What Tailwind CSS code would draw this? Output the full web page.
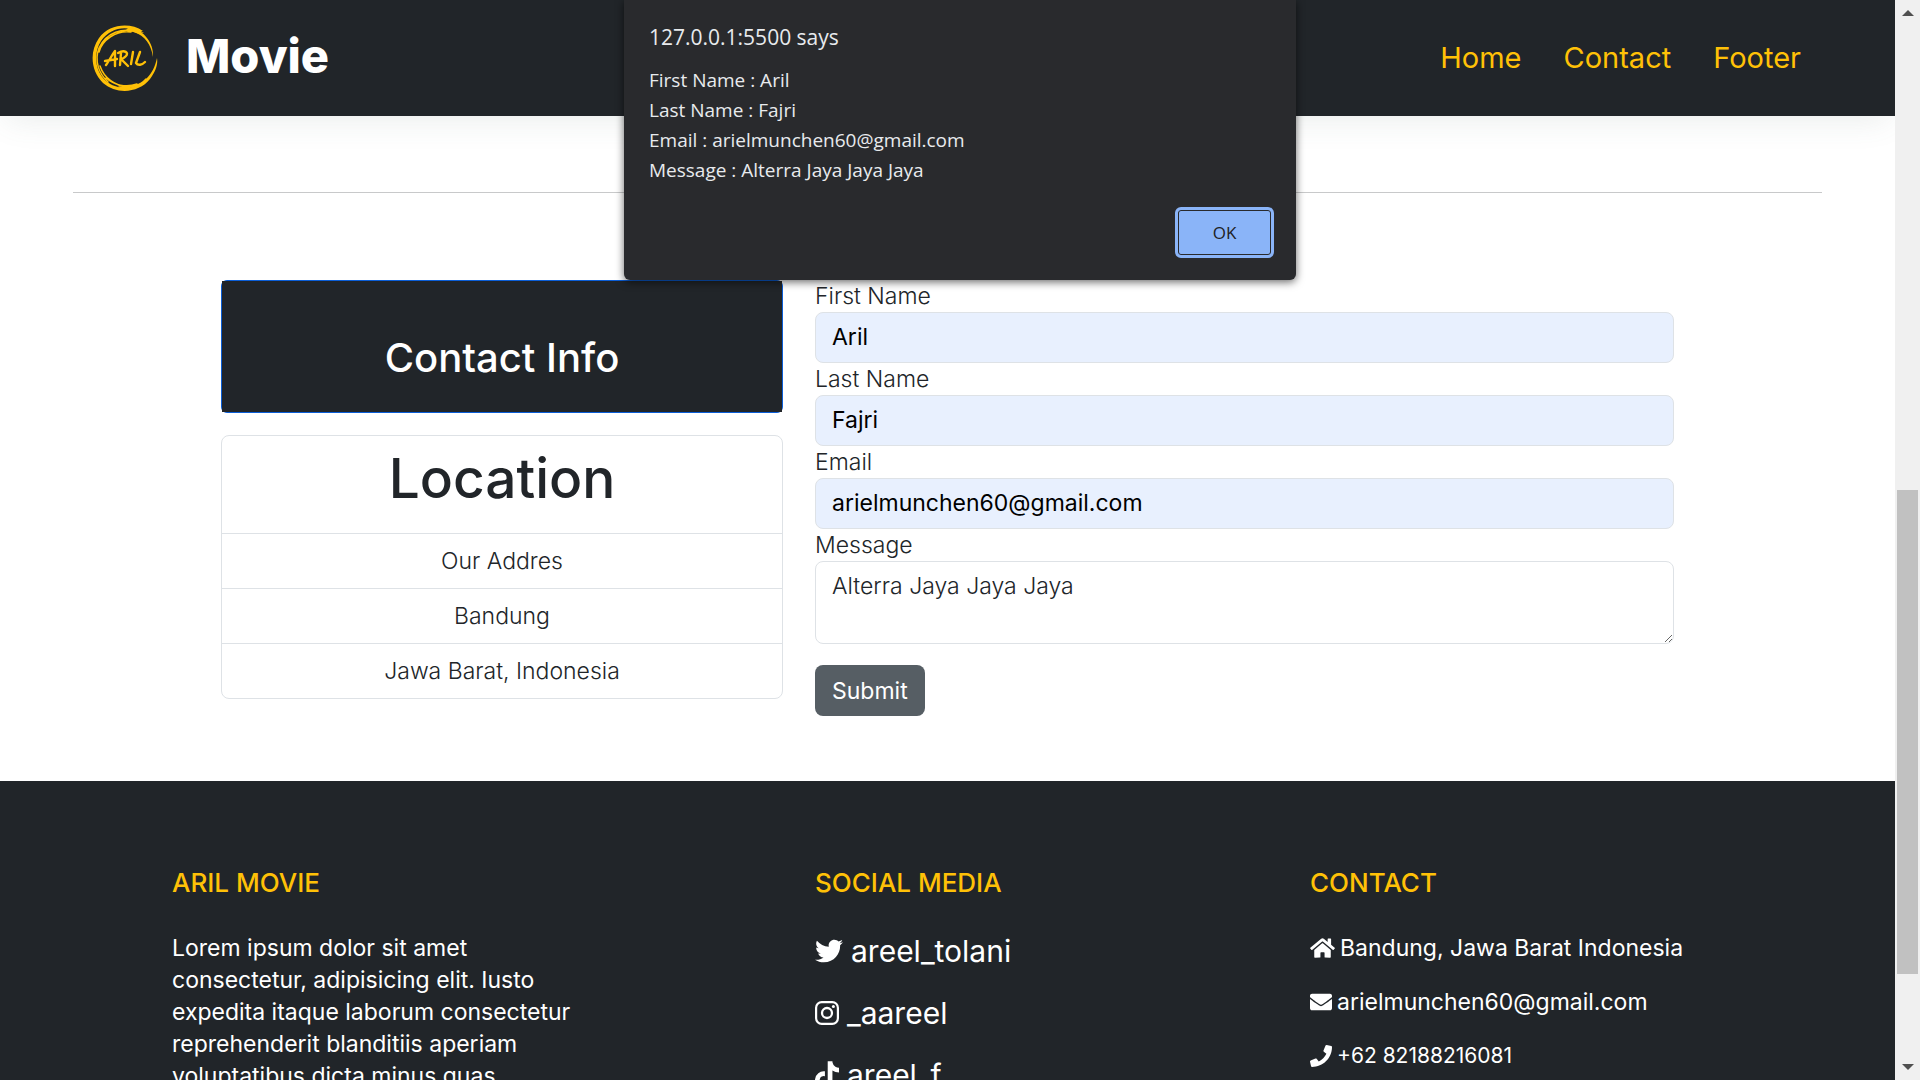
<!DOCTYPE html>
<html lang="en">
<head>
<meta charset="utf-8">
<meta name="viewport" content="width=device-width, initial-scale=1">
<title>Aril Movie</title>
<script src="https://cdn.jsdelivr.net/npm/@tailwindcss/browser@4"></script>
</head>
<body class="relative flex h-screen overflow-hidden bg-white font-['Inter',sans-serif] text-[23px] leading-8 text-[#212529]">

<div class="flex-1 min-w-0 overflow-hidden">
  <!-- Navigation bar -->
  <nav class="relative flex h-29 items-center justify-between bg-[#212529] pl-23 pr-[94px] shadow-[0_10px_30px_-6px_rgba(80,110,100,0.12)]">
    <a href="#" class="flex items-center gap-7 text-white">
      <svg class="h-[67px] w-[66px]" viewBox="0 0 66 67" fill="none" stroke="#ffc107" stroke-linecap="round">
        <path stroke="none" fill="#ffc107" d="M51 6C38-3 17-1 7 13C-3 27-1 46 11 58C25 70 47 68 58 54C64 46 66 39 65 33C63 42 60 48 55 53C44 65 26 66 14 56C3 46 1 29 9 16C18 3 34 0 46 7L52 8L49 6Z"/>
        <path stroke="none" fill="#ffc107" d="M37 2C52 5 62 18 61 32C59 19 53 11 42 7L34 5Z"/>
        <path stroke-width="1.5" d="M47 8C31 1 14 8 7 23C2 36 7 49 16 57M39 7C24 5 10 15 7 27M8 41C12 53 23 61 36 62M27 62C38 64 49 60 54 54M14 53C22 60 34 63 45 59"/>
        <path stroke-width="2.4" stroke-linejoin="round" d="M14 40C17 36 20 30 23 26L23 41M13 36L25 34M29 28L28 40M26 28C33 24 37 28 34 31C32 33 30 34 29 34L36 41M41 27L39 39M48 27L44 38C46 41 50 40 53 37"/>
      </svg>
      <span class="pb-1 text-[47px] leading-14 font-extrabold">Movie</span>
    </a>
    <ul class="flex gap-[42px] text-[29px] text-[#ffc107]">
      <li><a href="#">Home</a></li>
      <li><a href="#contact">Contact</a></li>
      <li><a href="#footer">Footer</a></li>
    </ul>
  </nav>

  <hr class="mx-[73px] mt-19 border-[#c8c9ca]">

  <!-- Contact section -->
  <section id="contact" class="mx-auto mt-[87px] grid max-w-[1453px] grid-cols-[562fr_859fr] items-start gap-8">
    <div class="flex flex-col gap-[22px] text-center">
      <div class="rounded-md border border-[#0b5ed7]">
        <h2 class="bg-[#212529] pt-[53px] pb-[30px] text-[40px] leading-12 font-medium text-white">Contact Info</h2>
      </div>
      <ul class="divide-y divide-[#dee2e6] rounded-lg border border-[#dee2e6] font-light">
        <li class="px-4 pt-[10px] pb-[23px]"><h1 class="text-[55px] leading-16 font-medium">Location</h1></li>
        <li class="px-4 py-[11px]">Our Addres</li>
        <li class="px-4 py-[11px]">Bandung</li>
        <li class="px-4 py-[11px]">Jawa Barat, Indonesia</li>
      </ul>
    </div>

    <form class="flex flex-col items-start font-light">
      <label for="first">First Name</label>
      <input id="first" type="text" value="Aril" class="h-[51px] w-full rounded-lg border border-[#dee2e6] bg-[#e8f0fe] px-4 pb-[2px] font-normal text-black">
      <label for="last">Last Name</label>
      <input id="last" type="text" value="Fajri" class="h-[51px] w-full rounded-lg border border-[#dee2e6] bg-[#e8f0fe] px-4 pb-[2px] font-normal text-black">
      <label for="email">Email</label>
      <input id="email" type="email" value="arielmunchen60@gmail.com" class="h-[51px] w-full rounded-lg border border-[#dee2e6] bg-[#e8f0fe] px-4 pb-[2px] font-normal text-black">
      <label for="message">Message</label>
      <textarea id="message" rows="2" class="block w-full rounded-lg border border-[#dee2e6] px-4 pt-2 pb-[9px]">Alterra Jaya Jaya Jaya</textarea>
      <button type="button" class="mt-[21px] h-[51px] rounded-lg bg-[#565e64] px-[17px] font-normal text-white">Submit</button>
    </form>
  </section>

  <!-- Footer -->
  <footer id="footer" class="mt-[65px] bg-[#212529] pt-[86px] pb-16 text-white">
    <div class="mx-[172px] grid grid-cols-[643fr_495fr_413fr]">
      <div>
        <h5 class="text-[26px] font-medium text-[#ffc107]">ARIL MOVIE</h5>
        <p class="mt-[33px] max-w-[420px]">Lorem ipsum dolor sit amet consectetur, adipisicing elit. Iusto expedita itaque laborum consectetur reprehenderit blanditiis aperiam voluptatibus dicta minus quas.</p>
      </div>
      <div>
        <h5 class="text-[26px] font-medium text-[#ffc107]">SOCIAL MEDIA</h5>
        <ul class="mt-9 flex flex-col gap-[30px] text-[30px]">
          <li><a href="#" class="flex items-center gap-2">
            <svg class="size-7" viewBox="0 0 512 512" fill="currentColor"><path d="M459.37 151.716c.325 4.548.325 9.097.325 13.645 0 138.72-105.583 298.558-298.558 298.558-59.452 0-114.68-17.219-161.137-47.106 8.447.974 16.568 1.299 25.34 1.299 49.055 0 94.213-16.568 130.274-44.832-46.132-.975-84.792-31.188-98.112-72.772 6.498.974 12.995 1.624 19.818 1.624 9.421 0 18.843-1.3 27.614-3.573-48.081-9.747-84.143-51.98-84.143-102.985v-1.299c13.969 7.797 30.214 12.67 47.431 13.319-28.264-18.843-46.781-51.005-46.781-87.391 0-19.492 5.197-37.36 14.294-52.954 51.655 63.675 129.3 105.258 216.365 109.807-1.624-7.797-2.599-15.918-2.599-24.04 0-57.828 46.782-104.934 104.934-104.934 30.213 0 57.502 12.67 76.67 33.137 23.715-4.548 46.456-13.32 66.599-25.34-7.798 24.366-24.366 44.833-46.132 57.827 21.117-2.273 41.584-8.122 60.426-16.243-14.292 20.791-32.161 39.308-52.628 54.253z"/></svg>
            areel_tolani</a></li>
          <li><a href="#" class="flex items-center gap-2">
            <svg class="size-6" viewBox="0 0 24 24" fill="none" stroke="currentColor"><rect x="1.1" y="1.1" width="21.8" height="21.8" rx="5.6" stroke-width="2.2"/><circle cx="12" cy="12" r="5" stroke-width="2.3"/><circle cx="18.4" cy="5.6" r="1.5" fill="currentColor" stroke="none"/></svg>
            _aareel</a></li>
          <li><a href="#" class="flex items-center gap-2">
            <svg class="h-7 w-6" viewBox="0 0 448 512" fill="currentColor"><path d="M448,209.91a210.06,210.06,0,0,1-122.77-39.25V349.38A162.55,162.55,0,1,1,185,188.31V278.2a74.62,74.62,0,1,0,52.23,71.18V0l88,0a121.18,121.18,0,0,0,1.86,22.17h0A122.18,122.18,0,0,0,381,102.39a121.43,121.43,0,0,0,67,20.14Z"/></svg>
            areel_f</a></li>
        </ul>
      </div>
      <div>
        <h5 class="text-[26px] font-medium text-[#ffc107]">CONTACT</h5>
        <ul class="mt-[33px] flex flex-col gap-[22px] whitespace-nowrap">
          <li class="flex items-center gap-[5px]">
            <svg class="h-[22px] w-[25px]" viewBox="0 0 576 512" fill="currentColor"><path d="M280.37 148.26L96 300.11V464a16 16 0 0 0 16 16l112.06-.29a16 16 0 0 0 15.92-16V368a16 16 0 0 1 16-16h64a16 16 0 0 1 16 16v95.64a16 16 0 0 0 16 16.05L464 480a16 16 0 0 0 16-16V300L295.67 148.26a12.19 12.19 0 0 0-15.3 0zM571.6 251.47L488 182.56V44.05a12 12 0 0 0-12-12h-56a12 12 0 0 0-12 12v72.61L318.47 43a48 48 0 0 0-61 0L4.34 251.47a12 12 0 0 0-1.6 16.9l25.5 31A12 12 0 0 0 45.15 301l235.22-193.74a12.19 12.19 0 0 1 15.3 0L530.9 301a12 12 0 0 0 16.9-1.6l25.5-31a12 12 0 0 0-1.7-16.93z"/></svg>
            Bandung, Jawa Barat Indonesia</li>
          <li class="flex items-center gap-[5px]">
            <svg class="size-[22px]" viewBox="0 0 512 512" fill="currentColor"><path d="M502.3 190.8c3.9-3.1 9.7-.2 9.7 4.7V400c0 26.5-21.5 48-48 48H48c-26.5 0-48-21.5-48-48V195.6c0-5 5.7-7.8 9.7-4.7 22.4 17.4 52.1 39.5 154.1 113.6 21.1 15.4 56.7 47.8 92.2 47.6 35.7.3 72-32.8 92.3-47.6 102-74.1 131.6-96.3 154-113.7zM256 320c23.2.4 56.6-29.2 73.4-41.4 132.7-96.3 142.8-104.7 173.4-128.7 5.8-4.5 9.2-11.5 9.2-18.9v-19c0-26.5-21.5-48-48-48H48c-26.5 0-48 21.5-48 48v19c0 7.4 3.4 14.3 9.2 18.9 30.6 23.9 40.7 32.4 173.4 128.7 16.8 12.2 50.2 41.8 73.4 41.4z"/></svg>
            arielmunchen60@gmail.com</li>
          <li class="flex items-center gap-[5px] text-[21px]">
            <svg class="size-[22px]" viewBox="0 0 512 512" fill="currentColor"><path d="M493.4 24.6l-104-24c-11.3-2.6-22.9 3.3-27.5 13.9l-48 112c-4.2 9.8-1.4 21.3 6.9 28l60.6 49.6c-36 76.7-98.9 140.5-177.2 177.2l-49.6-60.6c-6.8-8.3-18.2-11.1-28-6.9l-112 48C3.9 366.5-2 378.1.6 389.4l24 104C27.1 504.2 36.7 512 48 512c256.1 0 464-207.5 464-464 0-11.2-7.7-20.9-18.6-23.4z"/></svg>
            +62 82188216081</li>
        </ul>
      </div>
    </div>
  </footer>
</div>

<!-- Scrollbar -->
<div class="flex w-[25px] shrink-0 flex-col items-center justify-between bg-[#f0f0f0] py-[10px]" aria-hidden="true">
  <svg class="h-[6px] w-3" viewBox="0 0 12 6" fill="#505050"><path d="M6 0L12 6H0Z"/></svg>
  <div class="flex w-full flex-1 flex-col px-[2px]">
    <div class="grow-[474]"></div>
    <div class="grow-[484] bg-[#c1c1c1]"></div>
    <div class="grow-[90]"></div>
  </div>
  <svg class="h-[6px] w-3" viewBox="0 0 12 6" fill="#505050"><path d="M0 0H12L6 6Z"/></svg>
</div>

<!-- Alert dialog -->
<div role="alertdialog" aria-labelledby="alert-title" class="absolute top-0 left-1/2 flex w-[672px] -translate-x-1/2 flex-col rounded-b-md bg-[#292a2d] pr-[22px] pl-[25px] pt-[21px] pb-[22px] font-['Open_Sans',sans-serif] text-[#e8eaed] shadow-[0_2px_8px_rgba(0,0,0,0.6)]">
  <h2 id="alert-title" class="text-[21px] leading-8">127.0.0.1:5500 says</h2>
  <p class="mt-3 text-[19px] leading-[30px]">First Name : Aril<br>Last Name : Fajri<br>Email : arielmunchen60@gmail.com<br>Message : Alterra Jaya Jaya Jaya</p>
  <button type="button" class="mt-[22px] h-[51px] w-[99px] self-end rounded-md border-3 border-[#8ab4f8] bg-[#8ab4f8] text-[17px] leading-6 text-[#202124] shadow-[inset_0_0_0_1px_#292a2d]">OK</button>
</div>
</body>
</html>
